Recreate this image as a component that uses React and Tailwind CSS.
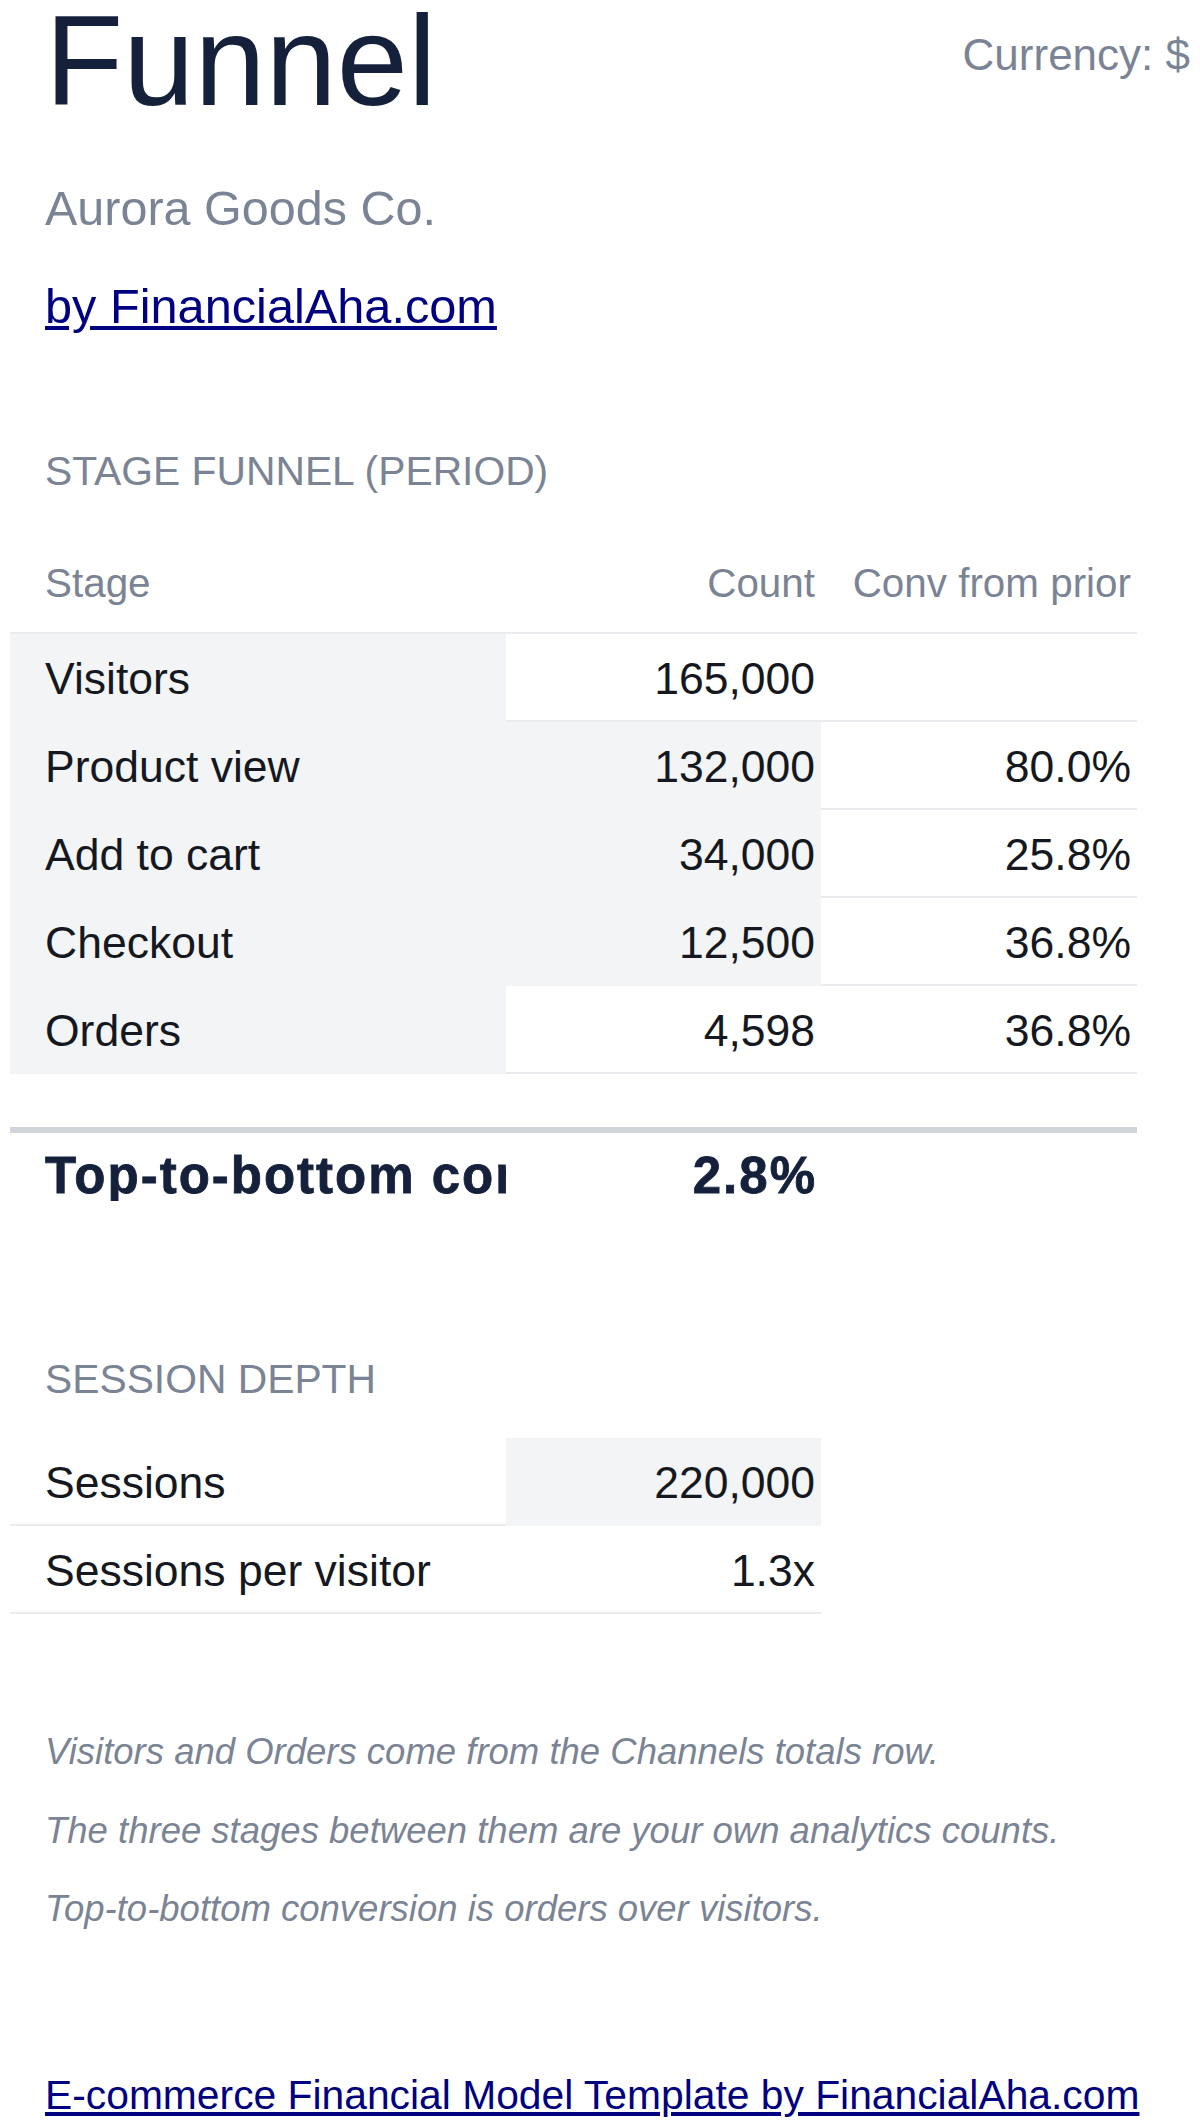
const stages = [
  { name: 'Visitors', count: '165,000', conv: '', input: false },
  { name: 'Product view', count: '132,000', conv: '80.0%', input: true },
  { name: 'Add to cart', count: '34,000', conv: '25.8%', input: true },
  { name: 'Checkout', count: '12,500', conv: '36.8%', input: true },
  { name: 'Orders', count: '4,598', conv: '36.8%', input: false },
];

const sessions = [
  { name: 'Sessions', value: '220,000', input: true },
  { name: 'Sessions per visitor', value: '1.3x', input: false },
];

const notes = [
  'Visitors and Orders come from the Channels totals row.',
  'The three stages between them are your own analytics counts.',
  'Top-to-bottom conversion is orders over visitors.',
];

function Cell({ children, shaded, right }) {
  return (
    <div
      className={`box-border flex h-[88px] items-center border-b-2 pt-[4px] text-[44.5px] leading-none whitespace-nowrap ${
        shaded ? 'border-[#f3f4f6] bg-[#f3f4f6]' : 'border-[#e9ebee] bg-white'
      } ${right ? 'justify-end pr-[6px]' : 'pl-[35px]'}`}
    >
      {children}
    </div>
  );
}

function SectionLabel({ children, className = '' }) {
  return (
    <h2 className={`pl-[35px] text-[40.8px] leading-none text-[#7b8494] ${className}`}>
      {children}
    </h2>
  );
}

export default function App() {
  return (
    <div className="min-h-screen bg-white px-[10px] font-['Liberation_Sans',Arial,sans-serif] text-[#15181e]">
      {/* Title */}
      <header className="flex items-start justify-between pl-[35px]">
        <h1 className="text-[128px] leading-[122px] text-[#15213b]">Funnel</h1>
        <span className="mt-[33px] text-[44px] leading-none text-[#7b8494]">Currency: $</span>
      </header>
      <p className="mt-[62px] pl-[35px] text-[48.5px] leading-none text-[#7b8494]">Aurora Goods Co.</p>
      <div className="mt-[49px] pl-[35px]">
        <a href="#" className="text-[48.7px] leading-none text-[#000080] underline">
          by FinancialAha.com
        </a>
      </div>

      {/* Stage funnel */}
      <SectionLabel className="mt-[121px]">STAGE FUNNEL (PERIOD)</SectionLabel>
      <div className="mt-[71px] w-[1127px]">
        <div className="grid grid-cols-[496px_315px_316px] border-b-2 border-[#e9ebee] pb-[29px] text-[40.4px] leading-none text-[#7b8494]">
          <div className="pl-[35px]">Stage</div>
          <div className="pr-[6px] text-right">Count</div>
          <div className="pr-[6px] text-right">Conv from prior</div>
        </div>
        {stages.map((s) => (
          <div key={s.name} className="grid grid-cols-[496px_315px_316px]">
            <Cell shaded>{s.name}</Cell>
            <Cell shaded={s.input} right>{s.count}</Cell>
            <Cell right>{s.conv}</Cell>
          </div>
        ))}
        <div className="mt-[53px] h-[6px] bg-[#d1d5db]" />
        <div className="grid grid-cols-[496px_315px_316px] pt-[17px] text-[51px] font-bold leading-none tracking-[2px] text-[#15213b] [-webkit-text-stroke:0.8px_#15213b]">
          <div className="overflow-hidden whitespace-nowrap pl-[35px]">Top-to-bottom conversion</div>
          <div className="pr-[4px] text-right">2.8%</div>
        </div>
      </div>

      {/* Session depth */}
      <SectionLabel className="mt-[158px]">SESSION DEPTH</SectionLabel>
      <div className="mt-[38px] w-[811px]">
        {sessions.map((s) => (
          <div key={s.name} className="grid grid-cols-[496px_315px]">
            <Cell>{s.name}</Cell>
            <Cell shaded={s.input} right>{s.value}</Cell>
          </div>
        ))}
      </div>

      {/* Notes */}
      <div className="mt-[120px] flex flex-col gap-[42px] pl-[35px] text-[36.5px] italic leading-none text-[#7b8494]">
        {notes.map((n) => (
          <p key={n}>{n}</p>
        ))}
      </div>

      <div className="mt-[147px] pl-[35px]">
        <a href="#" className="text-[40.8px] leading-none text-[#000080] underline">
          E-commerce Financial Model Template by FinancialAha.com
        </a>
      </div>
    </div>
  );
}
